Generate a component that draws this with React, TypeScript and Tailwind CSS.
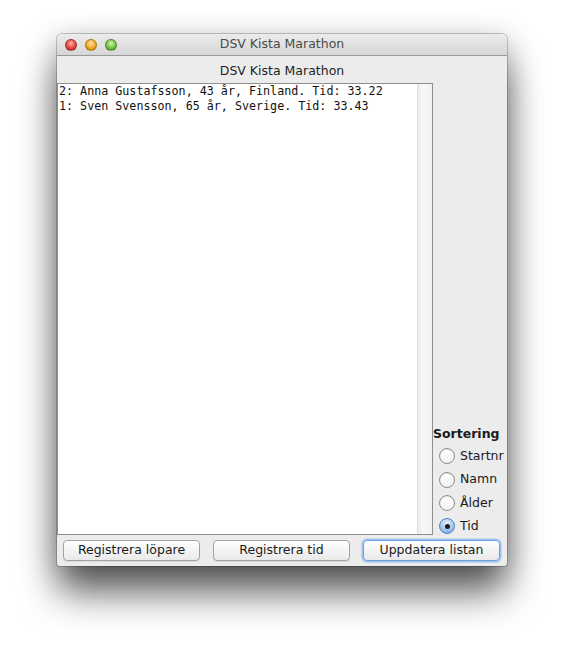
import React from 'react';

const ui = { fontFamily: '"DejaVu Sans", "Liberation Sans", sans-serif' };
const mono = { fontFamily: '"DejaVu Sans Mono", "Liberation Mono", monospace' };

const runners = [
  '2: Anna Gustafsson, 43 år, Finland. Tid: 33.22',
  '1: Sven Svensson, 65 år, Sverige. Tid: 33.43',
];

const sortOptions = ['Startnr', 'Namn', 'Ålder', 'Tid'];

function Light({ color }: { color: string }) {
  return (
    <span
      className="w-[12px] h-[12px] rounded-full border border-black/25 shrink-0"
      style={{ background: color }}
    />
  );
}

function Radio({ label, checked }: { label: string; checked?: boolean }) {
  return (
    <div className="flex items-center h-[23.4px] pl-[6px] gap-[5px]">
      {checked ? (
        <span className="w-[16px] h-[16px] rounded-full border border-[#5a7fb5] bg-[radial-gradient(circle_at_50%_30%,#eaf3ff,#9cc3ef_60%,#6a9fdc)] flex items-center justify-center shrink-0">
          <span className="w-[5px] h-[5px] rounded-full bg-[#1a1a1a]" />
        </span>
      ) : (
        <span className="w-[16px] h-[16px] rounded-full border border-[#8e8e8e] bg-[linear-gradient(to_bottom,#ffffff,#f2f2f2)] shadow-[inset_0_1px_1px_rgba(0,0,0,0.12)] shrink-0" />
      )}
      <span className="text-[12.5px] text-[#1a1a1a]">{label}</span>
    </div>
  );
}

function Button({ label, focused }: { label: string; focused?: boolean }) {
  return (
    <button
      className={
        'w-[137px] h-[21px] rounded-[4px] text-[12.5px] text-[#1a1a1a] bg-[linear-gradient(to_bottom,#ffffff,#f4f4f4_50%,#e9e9e9)] ' +
        (focused
          ? 'border border-[#6f9fdc] shadow-[0_0_0_1.5px_#9fc2ee]'
          : 'border border-[#a3a3a3] shadow-[0_1px_0_rgba(0,0,0,0.08)]')
      }
    >
      {label}
    </button>
  );
}

export default function App() {
  return (
    <div className="w-[564px] h-[645px] bg-white relative" style={ui}>
      <div className="absolute left-[57px] top-[34px] w-[450px] h-[532px] flex flex-col rounded-t-[5px] rounded-b-[3px] bg-[#ececec] shadow-[0_28px_38px_-2px_rgba(0,0,0,0.62),0_6px_30px_rgba(0,0,0,0.25),0_0_0_1px_rgba(0,0,0,0.2)]">
        {/* title bar */}
        <div className="h-[22px] shrink-0 flex items-center relative rounded-t-[5px] bg-[linear-gradient(to_bottom,#ececec,#d6d6d6)] border-b border-[#9a9a9a]">
          <div className="absolute left-[8px] top-[5px] flex gap-[8px]">
            <Light color="radial-gradient(circle at 50% 35%, #ffb3ad, #e2463b 55%, #b5271f)" />
            <Light color="radial-gradient(circle at 50% 35%, #ffe3a3, #f0a82a 55%, #c47d12)" />
            <Light color="radial-gradient(circle at 50% 35%, #d6f5b0, #72c443 55%, #3f8f1d)" />
          </div>
          <div className="w-full text-center text-[12.5px] text-[#4a4a4a]">DSV Kista Marathon</div>
        </div>

        {/* header label */}
        <div className="h-[27px] shrink-0 flex items-center justify-center pt-[3px] text-[12.5px] text-[#1f1f1f]">
          DSV Kista Marathon
        </div>

        {/* list + sorting */}
        <div className="flex h-[452px] shrink-0">
          <div className="w-[376px] h-full border border-[#8f8f8f] bg-white flex">
            <div className="flex-1 pl-[1px] text-[11.7px] leading-[15px] text-[#111]" style={mono}>
              {runners.map((r) => (
                <div key={r} className="whitespace-pre">{r}</div>
              ))}
            </div>
            <div className="w-[15px] h-full border-l border-[#e0e0e0] bg-[linear-gradient(to_right,#ececec,#f8f8f8_35%,#f1f1f1)]" />
          </div>
          <div className="flex-1 flex flex-col justify-end mb-[-3px]">
            <div className="h-[20px] flex items-center text-[12.5px] font-bold text-[#1a1a1a]">Sortering</div>
            {sortOptions.map((o) => (
              <Radio key={o} label={o} checked={o === 'Tid'} />
            ))}
          </div>
        </div>

        {/* buttons */}
        <div className="flex-1 flex items-start pt-[5px] px-[6px] gap-[13px]">
          <Button label="Registrera löpare" />
          <Button label="Registrera tid" />
          <Button label="Uppdatera listan" focused />
        </div>
      </div>
    </div>
  );
}
